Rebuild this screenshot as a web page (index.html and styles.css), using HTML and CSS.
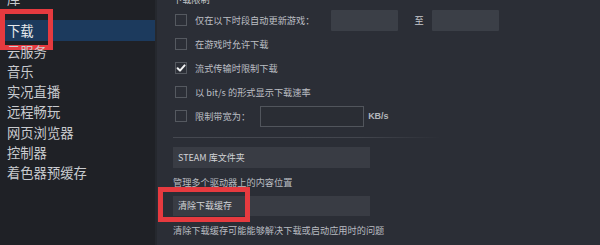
FILE: index.html
```html
<!DOCTYPE html>
<html lang="zh-CN">
<head>
<meta charset="utf-8">
<title>下载设置</title>
<link rel="stylesheet" href="styles.css">
</head>
<body>
<div class="app">
  <nav class="sidebar">
    <ul class="menu">
      <li class="item first">库</li>
      <li class="item active">下载<span class="mark mark-nav"></span></li>
      <li class="item">云服务</li>
      <li class="item">音乐</li>
      <li class="item">实况直播</li>
      <li class="item">远程畅玩</li>
      <li class="item">网页浏览器</li>
      <li class="item">控制器</li>
      <li class="item">着色器预缓存</li>
    </ul>
  </nav>
  <main class="main">
    <div class="section-title">下载限制</div>
    <div class="row">
      <span class="check"></span>
      <span class="label">仅在以下时段自动更新游戏：</span>
      <span class="field field-time"></span>
      <span class="to">至</span>
      <span class="field field-time"></span>
    </div>
    <div class="row">
      <span class="check"></span>
      <span class="label">在游戏时允许下载</span>
    </div>
    <div class="row">
      <span class="check checked"><svg viewBox="0 0 12 12" width="12" height="12"><polyline points="2.6,6.2 5,8.6 9.6,3.4" fill="none" stroke="#f2f3f4" stroke-width="2" stroke-linecap="round" stroke-linejoin="round"/></svg></span>
      <span class="label">流式传输时限制下载</span>
    </div>
    <div class="row">
      <span class="check"></span>
      <span class="label">以 bit/s 的形式显示下载速率</span>
    </div>
    <div class="row">
      <span class="check"></span>
      <span class="label">限制带宽为：</span>
      <span class="field field-bw"></span>
      <span class="unit">KB/s</span>
    </div>
    <div class="divider"></div>
    <div class="button">STEAM 库文件夹</div>
    <div class="desc">管理多个驱动器上的内容位置</div>
    <div class="button-wrap">
      <div class="button button-clear">清除下载缓存</div>
      <span class="mark mark-btn"></span>
    </div>
    <div class="desc">清除下载缓存可能能够解决下载或启动应用时的问题</div>
  </main>
</div>
</body>
</html>
```
FILE: styles.css
```css
html, body {
  margin: 0;
  padding: 0;
  width: 600px;
  height: 245px;
  overflow: hidden;
  background: #2b2e36;
  font-family: "Noto Sans CJK SC", "Noto Sans", "Liberation Sans", sans-serif;
}
.app {
  display: flex;
  height: 245px;
}
.sidebar {
  width: 155px;
  flex: none;
  background: #1f2126;
  border-right: 2px solid #25282e;
}
.menu {
  list-style: none;
  margin: 0;
  padding: 0;
}
.item {
  position: relative;
  height: 20.3px;
  line-height: 21px;
  padding-left: 7px;
  font-size: 13.3px;
  color: #c9cbcf;
  white-space: nowrap;
}
.item.first {
  margin-top: -12px;
}
.item.active {
  margin-top: 12px;
  background: #1c3a5d;
  color: #e8eaec;
}
.mark {
  position: absolute;
  box-sizing: border-box;
  border: 5px solid #e63a3f;
}
.mark-nav {
  left: 0;
  top: -11px;
  width: 53px;
  height: 41px;
}
.main {
  flex: 1;
  padding-left: 16px;
  color: #b9bcc1;
  font-size: 9.2px;
}
.section-title {
  height: 16px;
  line-height: 16px;
  margin-top: -9px;
  margin-bottom: 1px;
  color: #c3c5c9;
}
.row {
  display: flex;
  align-items: center;
  height: 24px;
  padding-left: 2px;
  white-space: nowrap;
}
.check {
  box-sizing: border-box;
  width: 12px;
  height: 12px;
  border: 1px solid #555960;
  background: #2c2f37;
  display: flex;
  align-items: center;
  justify-content: center;
  margin-right: 8px;
}
.check svg {
  display: block;
  flex: none;
}
.label {
  color: #bcbfc4;
}
.field {
  box-sizing: border-box;
  height: 21px;
}
.field-time {
  width: 67px;
  background: #3b3f47;
  border-radius: 1px;
}
.label + .field-time {
  margin-left: 17px;
}
.to {
  margin: 0 8px 0 16px;
  color: #c8cace;
}
.field-bw {
  width: 104px;
  margin-left: 10px;
  border: 1px solid #51555c;
  background: #2a2d34;
}
.unit {
  margin-left: 4px;
  font-family: "Liberation Sans", sans-serif;
  font-weight: bold;
  font-size: 9px;
  color: #b3b6bb;
}
.divider {
  height: 1px;
  width: 268px;
  margin-top: 9px;
  background: linear-gradient(to right, #454850 0%, #43464e 70%, rgba(67,70,78,0) 100%);
}
.button {
  box-sizing: border-box;
  width: 197px;
  height: 21px;
  margin-top: 9px;
  padding-left: 5px;
  line-height: 21px;
  background: #393c44;
  color: #d2d4d7;
  font-size: 9px;
}
.button-wrap {
  position: relative;
  margin-top: 7px;
}
.button-wrap .button {
  margin-top: 0;
  height: 20px;
  line-height: 20px;
}
.mark-btn {
  left: -15px;
  top: -9px;
  width: 92px;
  height: 35px;
}
.desc {
  height: 14px;
  line-height: 14px;
  margin-top: 7px;
  color: #b9bcc1;
}
```
